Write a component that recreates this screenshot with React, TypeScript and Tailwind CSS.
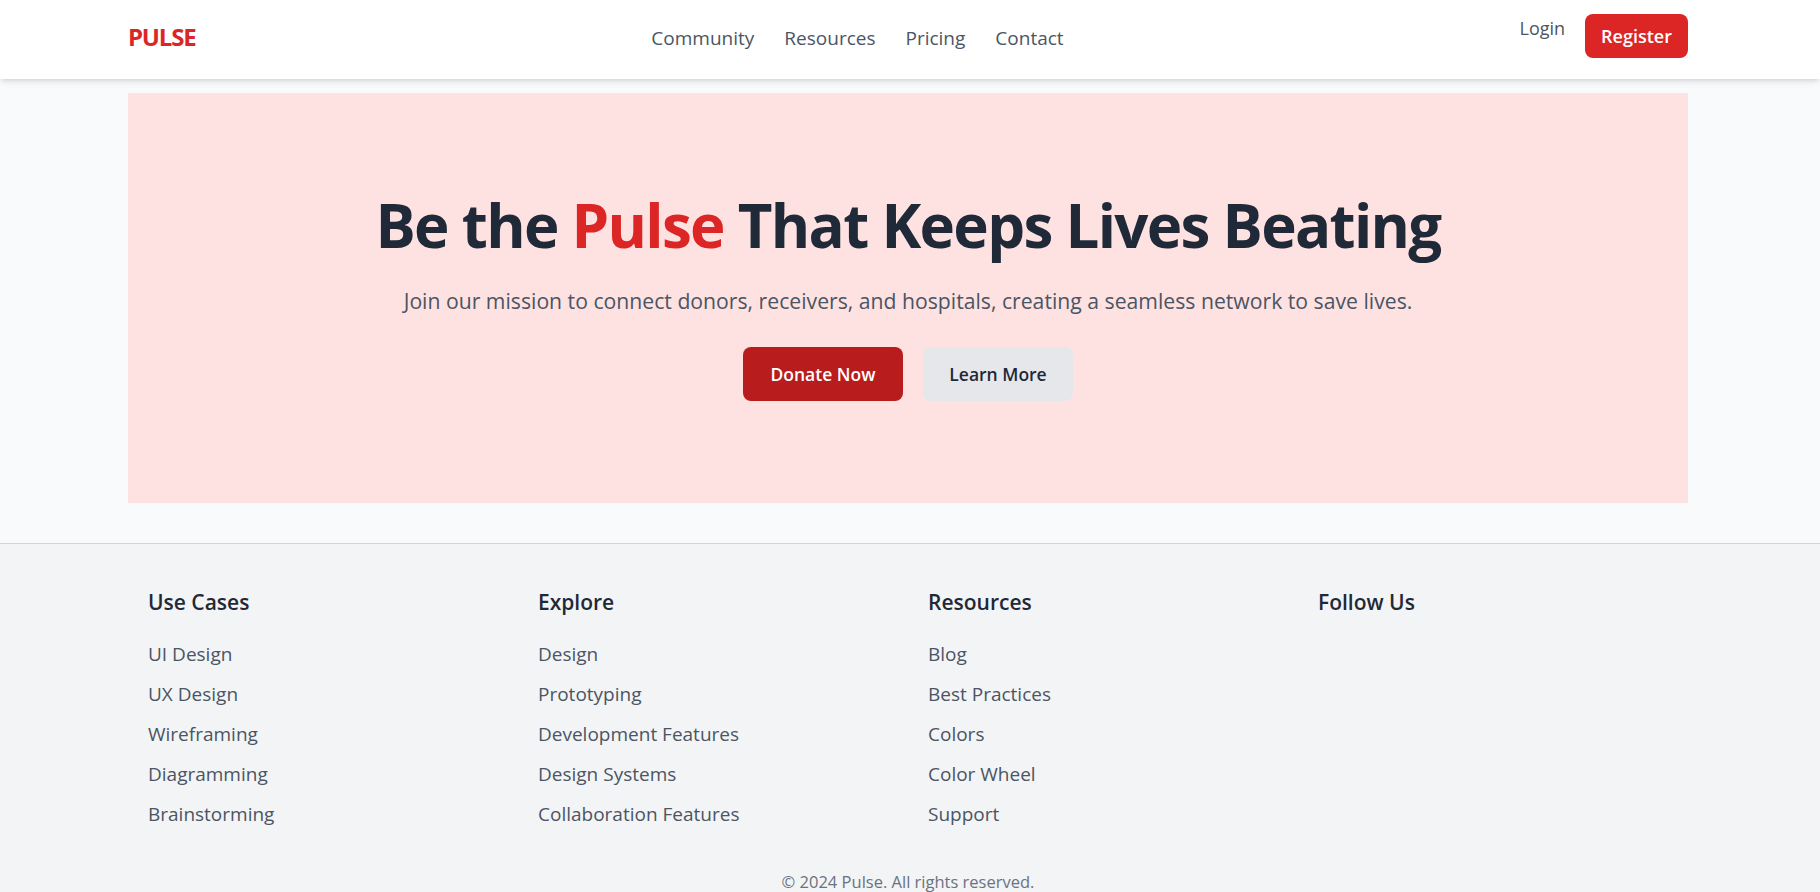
import React from "react";

const footerCols = [
  {
    title: "Use Cases",
    links: ["UI Design", "UX Design", "Wireframing", "Diagramming", "Brainstorming"],
  },
  {
    title: "Explore",
    links: ["Design", "Prototyping", "Development Features", "Design Systems", "Collaboration Features"],
  },
  {
    title: "Resources",
    links: ["Blog", "Best Practices", "Colors", "Color Wheel", "Support"],
  },
  { title: "Follow Us", links: [] as string[] },
];

export default function App() {
  return (
    <div className="min-h-screen bg-[#f9fafb] font-['Open_Sans',sans-serif]">
      {/* Top navigation */}
      <nav className="bg-white shadow-md">
        <div className="flex h-[79px] items-start justify-between pr-[132px] pl-32">
          <a href="#" className="mt-[21px] text-2xl font-bold tracking-[-0.05em] text-[#dc2626]">
            PULSE
          </a>
          <div className="mt-[24px] flex items-center gap-[30px] text-[19px] text-[#4b5563]">
            <a href="#">Community</a>
            <a href="#">Resources</a>
            <a href="#">Pricing</a>
            <a href="#">Contact</a>
          </div>
          <div className="mt-[14px] flex items-start gap-5">
            <a href="#" className="text-lg leading-7 font-medium text-[#4b5563]">
              Login
            </a>
            <button className="rounded-lg bg-[#dc2626] px-4 py-2 text-lg leading-7 font-semibold text-white">
              Register
            </button>
          </div>
        </div>
      </nav>

      {/* Hero */}
      <main className="pt-[14px] pr-[132px] pb-10 pl-32">
        <section className="flex h-[410px] flex-col items-center justify-center bg-[#fee2e2] text-center">
          <h1 className="text-6xl font-bold tracking-[-0.028em] text-[#1f2937]">
            Be the <span className="text-[#dc2626]">Pulse</span> That Keeps Lives Beating
          </h1>
          <p className="mt-8 text-[21.2px] leading-7 text-[#4b5563]">
            Join our mission to connect donors, receivers, and hospitals, creating a seamless network to save lives.
          </p>
          <div className="mt-8 flex gap-5">
            <button className="h-[54px] w-[160px] rounded-lg bg-[#b91c1c] text-[17.5px] font-semibold text-white">
              Donate Now
            </button>
            <button className="h-[54px] w-[150px] rounded-lg bg-[#e5e7eb] text-[17.5px] font-semibold text-[#1f2937]">
              Learn More
            </button>
          </div>
        </section>
      </main>

      {/* Footer */}
      <footer className="border-t border-[#d1d5db] bg-[#f3f4f6] pt-[44px] pr-[132px] pb-10 pl-32">
        <div className="grid grid-cols-4">
          {footerCols.map((col) => (
            <div key={col.title} className="px-5">
              <h3 className="text-[21px] leading-7 font-semibold text-[#1f2937]">{col.title}</h3>
              <ul className="mt-6 space-y-3 text-[19px] leading-7 text-[#4b5563]">
                {col.links.map((l) => (
                  <li key={l}>
                    <a href="#">{l}</a>
                  </li>
                ))}
              </ul>
            </div>
          ))}
        </div>
        <p className="mt-10 text-center text-[16.5px] leading-7 text-[#6b7280]">© 2024 Pulse. All rights reserved.</p>
      </footer>
    </div>
  );
}
